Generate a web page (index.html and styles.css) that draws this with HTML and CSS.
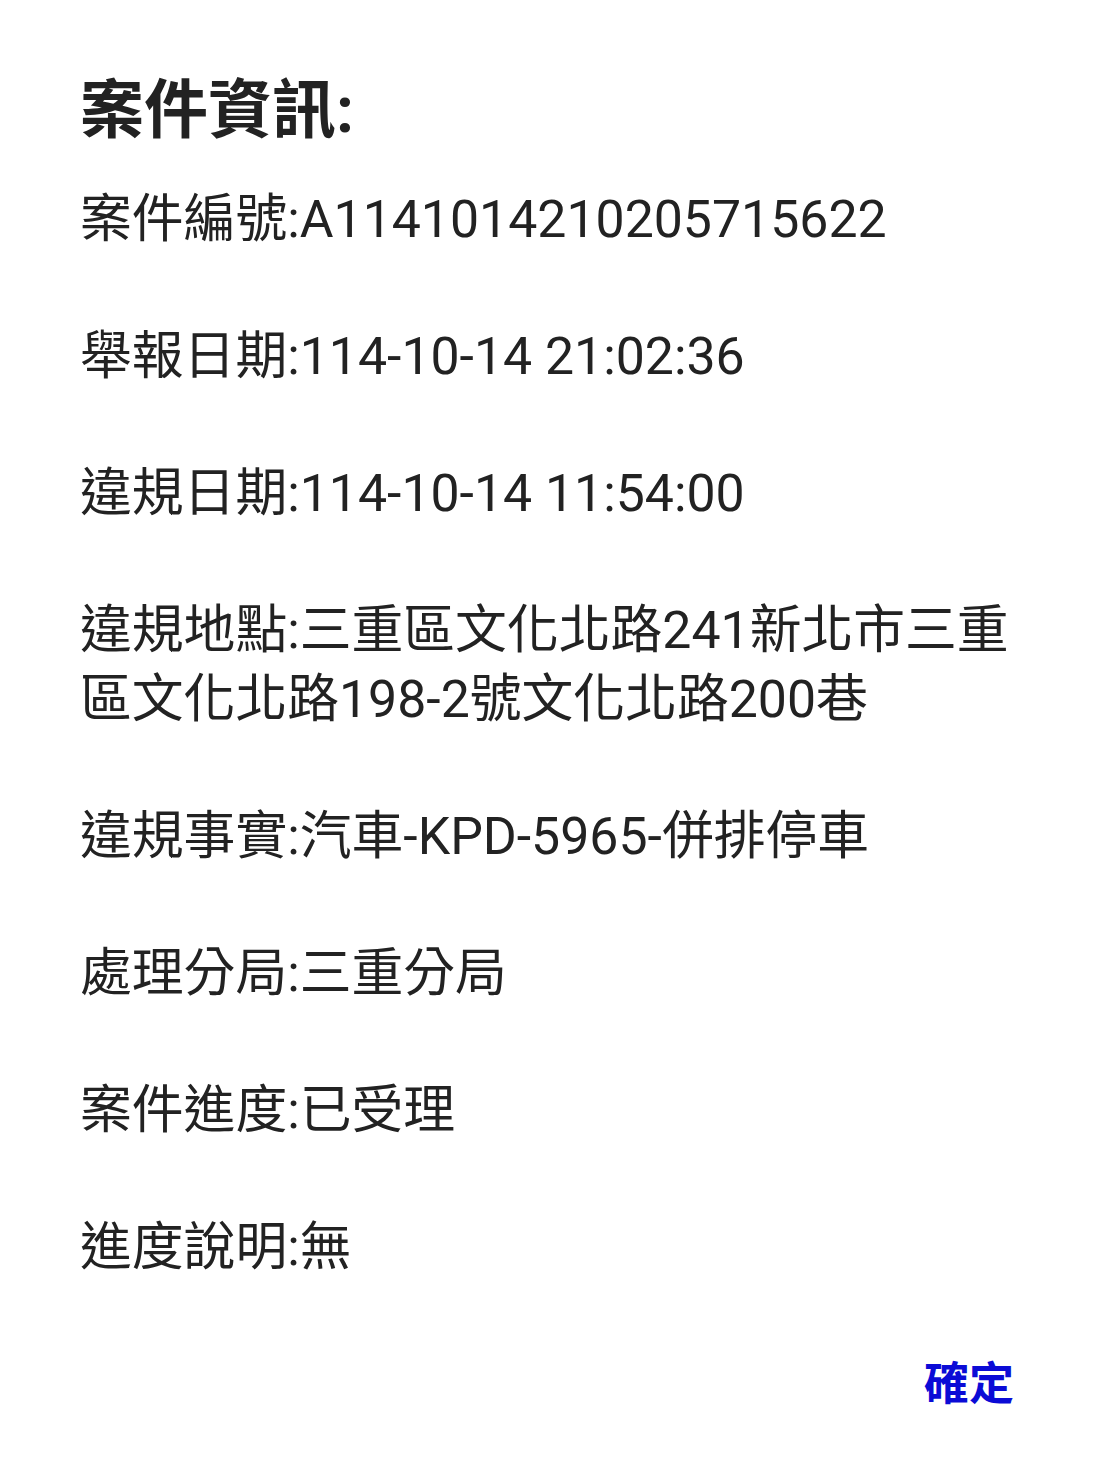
FILE: index.html
```html
<!DOCTYPE html>
<html lang="zh-Hant">
<head>
  <meta charset="UTF-8" />
  <meta name="viewport" content="width=device-width, initial-scale=1.0"/>
  <title>案件資訊</title>
  <link rel="stylesheet" href="styles.css">
</head>
<body>
  <div class="dialog">
    <h1 class="dialog-title">案件資訊:</h1>

    <div class="dialog-message">
      <p>案件編號:A1141014210205715622</p>
      <p>舉報日期:114-10-14 21:02:36</p>
      <p>違規日期:114-10-14 11:54:00</p>
      <p>違規地點:三重區文化北路241新北市三重區文化北路198-2號文化北路200巷</p>
      <p>違規事實:汽車-KPD-5965-併排停車</p>
      <p>處理分局:三重分局</p>
      <p>案件進度:已受理</p>
      <p>進度說明:無</p>
    </div>

    <div class="dialog-actions">
      <button class="dialog-btn">確定</button>
    </div>
  </div>
</body>
</html>
```

FILE: styles.css
```css
:root {
  --text: #222222;
  --accent: #0b0bd6;
  --background: #ffffff;
}

* {
  box-sizing: border-box;
  margin: 0;
  padding: 0;
}

body {
  font-family: Roboto, "Noto Sans CJK TC", sans-serif;
  background: var(--background);
  color: var(--text);
  height: 100vh;
}

.dialog {
  display: flex;
  flex-direction: column;
  padding: 71px 80px 0;
}

.dialog-title {
  font-size: 64px;
  font-weight: 700;
  line-height: 80px;
}

.dialog-message {
  margin-top: 35px;
  font-size: 51.8px;
  line-height: 68.5px;
}

.dialog-message p + p {
  margin-top: 68.5px;
}

.dialog-actions {
  display: flex;
  justify-content: flex-end;
  margin-top: 73px;
  margin-right: 9px;
}

.dialog-btn {
  font-family: inherit;
  font-size: 45px;
  font-weight: 700;
  line-height: 60px;
  color: var(--accent);
  background: none;
  border: none;
  cursor: pointer;
}
```
